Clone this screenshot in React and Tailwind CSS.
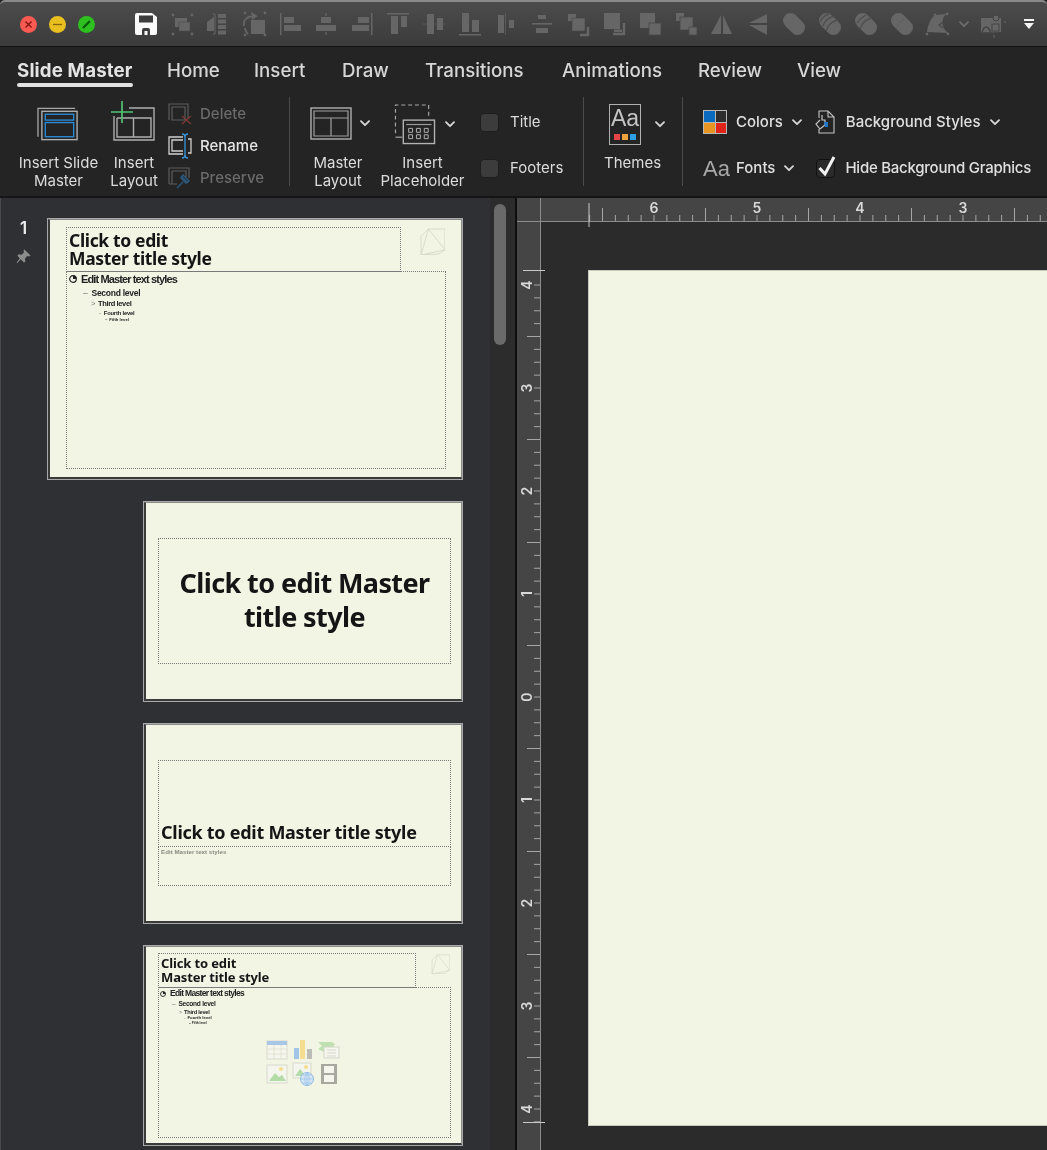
import React from 'react'

const G = '#666666'

// toolbar drawings, 28x28 box
const Handles = ({ p }) => p.map(([x, y], i) => <circle key={i} cx={x} cy={y} r="1.4" fill={G} />)
const Blob = ({ children }) => (
    <>
        <line x1="10.5" y1="10.5" x2="17.5" y2="17.5" stroke={G} strokeWidth="15" strokeLinecap="round" />
        {children}
    </>
)

const toolbarIcons = [
    <><rect x="7" y="8" width="12" height="9" fill={G} /><rect x="11" y="12" width="11" height="9" fill={G} stroke="#4a4a4a" strokeWidth=".6" /><Handles p={[[5, 5], [24, 5], [5, 24], [24, 24]]} /></>,
    <><path d="M3 12 L10 7 V21 H3 Z" fill={G} /><path d="M9 4H11V24H9" fill="none" stroke={G} strokeWidth="1" /><rect x="14" y="4" width="8" height="4" fill={G} /><rect x="14" y="9.5" width="8" height="4" fill={G} /><rect x="14" y="15" width="8" height="4" fill={G} /><rect x="14" y="20.5" width="8" height="4" fill={G} /></>,
    <><rect x="11" y="10" width="14" height="14" fill={G} /><path d="M4 16 C3 9 8 6 15 6 M11 3 L16 6 L12 9 M8 24 C6 22 5 20 5 18" fill="none" stroke={G} strokeWidth="1.8" /><Handles p={[[5, 3], [25, 3], [25, 25], [5, 25]]} /></>,
    <><rect x="4" y="3" width="1.5" height="22" fill={G} /><rect x="8" y="7" width="10" height="6" fill={G} /><rect x="8" y="15" width="17" height="6" fill={G} /></>,
    <><rect x="13.4" y="3" width="1.2" height="3" fill={G} /><rect x="9" y="7" width="10" height="6" fill={G} /><rect x="4" y="15" width="20" height="6" fill={G} /><rect x="13.4" y="22" width="1.2" height="3" fill={G} /></>,
    <><rect x="23" y="3" width="1.5" height="22" fill={G} /><rect x="10" y="7" width="11" height="6" fill={G} /><rect x="4" y="15" width="17" height="6" fill={G} /></>,
    <><rect x="3" y="3" width="22" height="1.5" fill={G} /><rect x="7" y="6" width="7" height="18" fill={G} /><rect x="17" y="6" width="6" height="11" fill={G} /></>,
    <><rect x="2" y="13.5" width="24" height="1" fill={G} opacity=".5" /><rect x="7" y="4" width="7" height="20" fill={G} /><rect x="17" y="8" width="6" height="12" fill={G} /></>,
    <><rect x="3" y="24" width="22" height="1.5" fill={G} /><rect x="6" y="3" width="7" height="19" fill={G} /><rect x="16" y="10" width="7" height="12" fill={G} /></>,
    <><rect x="6" y="5" width="6" height="18" fill={G} /><rect x="13" y="3" width="1" height="22" fill={G} opacity=".6" /><rect x="17" y="10" width="5" height="8" fill={G} /></>,
    <><rect x="10" y="5" width="8" height="4" fill={G} /><rect x="4" y="13" width="20" height="1.6" fill={G} /><rect x="8" y="18" width="12" height="5" fill={G} /></>,
    <><rect x="4" y="4" width="8" height="7" fill={G} /><rect x="8" y="8" width="13" height="13" fill={G} stroke="#484848" strokeWidth=".6" /><path d="M24 17V25H16" fill="none" stroke={G} strokeWidth="2.4" /></>,
    <><rect x="4" y="3" width="16" height="16" fill={G} /><path d="M24 13V24H13" fill="none" stroke={G} strokeWidth="2.4" /><rect x="14" y="19.5" width="8" height="2.5" fill={G} /></>,
    <><rect x="4" y="3" width="15" height="15" fill={G} /><rect x="13" y="13" width="12" height="12" fill={G} stroke="#484848" strokeWidth=".8" /></>,
    <><rect x="4" y="3" width="8" height="8" fill={G} /><rect x="8" y="7" width="13" height="13" fill={G} stroke="#484848" strokeWidth=".8" /><rect x="17" y="17" width="8" height="8" fill={G} stroke="#484848" strokeWidth=".8" /></>,
    <><path d="M13 5 V24 H3 Z" fill={G} /><path d="M15 5 L24 24 H15 Z" fill={G} /></>,
    <><path d="M23 4 V13 H5 Z" fill={G} /><path d="M23 15 V25 L5 15 Z" fill={G} /></>,
    <Blob />,
    <Blob><path d="M7 16 C9 10 13 7 19 6 M10 21 C12 15 16 11 22 10 M4 12 C6 8 9 5 13 4" fill="none" stroke="#4f4f4f" strokeWidth="1.3" /></Blob>,
    <Blob><path d="M8 19 C10 13 14 9 20 8 M5 13 C7 10 10 7 14 5" fill="none" stroke="#4f4f4f" strokeWidth="1.3" /></Blob>,
    <Blob><path d="M8 20 C10 14 13 10 19 8" fill="none" stroke="#565656" strokeWidth="1" strokeDasharray="2 2" /></Blob>,
    <><path d="M3 22 C4 13 8 7 11 5 L22 4 C17 9 17 17 24 23 Z" fill={G} /><path d="M19 12 L15 15 L19 18" fill="none" stroke="#4a4a4a" strokeWidth="1.2" /><Handles p={[[11, 5], [23, 4], [3, 24], [24, 24]]} /></>,
]

const Chevron = ({ className = 'w-[10px] h-[7px]', stroke = '#d8d8d8' }) => (
    <svg viewBox="0 0 10 7" className={className} fill="none" stroke={stroke} strokeWidth="1.8">
        <path d="M1 1.2 L5 5.2 L9 1.2" strokeLinecap="round" strokeLinejoin="round" />
    </svg>
)

const TitleBar = () => (
    <div className="h-[47px] flex items-center shrink-0 bg-gradient-to-b from-[#4c4c4c] to-[#3b3b3b] border-t-2 border-t-[#8a8a8a] border-b border-b-[#141414] rounded-t-[5px]">
        <div className="flex gap-[12px] ml-[20px] w-[108px]">
            <svg viewBox="0 0 17 17" className="w-[17px] h-[17px]"><circle cx="8.5" cy="8.5" r="8.5" fill="#fb5a53" /><path d="M5.5 5.5 L11.5 11.5 M11.5 5.5 L5.5 11.5" stroke="#7c1410" strokeWidth="1.3" /></svg>
            <svg viewBox="0 0 17 17" className="w-[17px] h-[17px]"><circle cx="8.5" cy="8.5" r="8.5" fill="#e8bf1f" /><path d="M4 8.5 H13" stroke="#85660a" strokeWidth="1.3" /></svg>
            <svg viewBox="0 0 17 17" className="w-[17px] h-[17px]"><circle cx="8.5" cy="8.5" r="8.5" fill="#2dc01f" /><path d="M5 12 L12 5" stroke="#0a5e0a" strokeWidth="2.4" /></svg>
        </div>
        <div className="flex items-center">
            <div className="w-[36px] flex justify-center">
                <svg viewBox="0 0 22 22" className="w-[22px] h-[22px]">
                    <path d="M2 0 H17 L22 4 V20 Q22 22 20 22 H2 Q0 22 0 20 V2 Q0 0 2 0 Z" fill="#fafafa" />
                    <rect x="4" y="2.5" width="14" height="7" fill="#3d3d3d" />
                    <path d="M7 22 V17 Q7 15 9 15 H13 Q15 15 15 17 V22 H12.5 V18 H9.5 V22 Z" fill="#3d3d3d" />
                </svg>
            </div>
            {toolbarIcons.map((icon, i) => (
                <div key={i} className="w-[36px] flex justify-center">
                    <svg viewBox="0 0 28 28" className="w-[28px] h-[28px]">{icon}</svg>
                </div>
            ))}
            <Chevron className="w-[10px] h-[7px] ml-[3px]" stroke="#6c6c6c" />
            <div className="w-[37px] flex justify-end">
                <svg viewBox="0 0 28 28" className="w-[28px] h-[28px]">
                    <path d="M3 23 V8 H23 V22 Z" fill={G} />
                    <path d="M4 23 C6 15 10 15 13 23 Z" fill="none" stroke="#444" strokeWidth="1.3" />
                    <circle cx="18" cy="8" r="3" fill={G} stroke="#444" />
                    <rect x="14" y="14" width="7" height="7" fill={G} stroke="#444" />
                    <path d="M26 12 H28 M16 25 V28" stroke={G} />
                </svg>
            </div>
            <div className="ml-[18px] flex flex-col items-center gap-[2px]">
                <div className="w-[10px] h-[2px] bg-[#f4f4f4]" />
                <svg viewBox="0 0 10 6" className="w-[10px] h-[6px]"><path d="M0 0 H10 L5 6 Z" fill="#f4f4f4" /></svg>
            </div>
        </div>
    </div>
)

const tabs = [
    ['Slide Master', 'w-[150px]'],
    ['Home', 'w-[87px]'],
    ['Insert', 'w-[88px]'],
    ['Draw', 'w-[83px]'],
    ['Transitions', 'w-[137px]'],
    ['Animations', 'w-[136px]'],
    ['Review', 'w-[99px]'],
    ['View', 'w-[80px]'],
]

const Tabs = () => (
    <div className="h-[43px] flex pl-[17px] text-[18.7px] leading-[47px] font-medium text-[#d6d6d6] shrink-0">
        {tabs.map(([name, w], i) => (
            <div key={name} className={w}>
                <span className={i === 0 ? 'relative inline-block font-bold text-[#e4e4e4] tracking-[0.15px]' : 'inline-block'}>
                    {name}
                    {i === 0 && <span className="absolute left-0 right-0 top-[36px] h-[3.5px] rounded-full bg-[#e2e2e2]" />}
                </span>
            </div>
        ))}
    </div>
)

const Divider = ({ className }) => <div className={`w-px h-[89px] mt-[7px] bg-[#4b4b4b] ${className}`} />

const LargeButton = ({ className, icon, children }) => (
    <div className={`flex flex-col items-center shrink-0 ${className}`}>
        <div className="h-[64px] flex items-center">{icon}</div>
        <div className="text-center leading-[18px] text-[#dcdcdc] whitespace-nowrap">{children}</div>
    </div>
)

const SmallRow = ({ icon, label, dim }) => (
    <div className="h-[32px] flex items-center gap-[8px]">
        {icon}
        <span className={dim ? 'text-[#6a6a6a] font-medium' : 'text-[#e6e6e6] font-medium'}>{label}</span>
    </div>
)

const Check = ({ label }) => (
    <div className="h-[46px] flex items-center">
        <div className="w-[19px] h-[19px] rounded-[4px] bg-[#3c3c3c] border border-[#1e1e1e]" />
        <span className="ml-[11px] pt-[1px] text-[#dcdcdc]">{label}</span>
    </div>
)

const Ribbon = () => (
    <div className="h-[108px] flex text-[15px] shrink-0 border-b-2 border-b-[#141414]">
        <LargeButton className="w-[101px] ml-[8px]" icon={
            <svg viewBox="0 0 44 34" className="w-[43px] h-[34px] mt-[4px]" fill="none">
                <path d="M1 30 V1 H39" stroke="#a8a8a8" strokeWidth="1.3" />
                <rect x="5" y="4" width="36" height="29" stroke="#b0b0b0" strokeWidth="1.4" />
                <rect x="8.5" y="7" width="29" height="6" stroke="#2b8ad4" strokeWidth="1.4" />
                <rect x="8.5" y="15.5" width="29" height="14.5" stroke="#2b8ad4" strokeWidth="1.4" />
            </svg>
        }>Insert Slide<br />Master</LargeButton>
        <LargeButton className="w-[50px]" icon={
            <svg viewBox="0 0 46 42" className="w-[46px] h-[42px] mb-[2px]" fill="none">
                <path d="M18 8 H43 V40 H3 V16 M6 18 H40 V37 H6 V18 M22.5 18 V37" stroke="#aeaeae" strokeWidth="1.4" />
                <path d="M11 1 V23 M0 12 H22" stroke="#52c274" strokeWidth="1.7" />
            </svg>
        }>Insert<br />Layout</LargeButton>
        <div className="w-[110px] ml-[9px] pt-[8px] shrink-0">
            <SmallRow dim label="Delete" icon={
                <svg viewBox="0 0 24 22" className="w-[24px] h-[22px]" fill="none">
                    <path d="M1 17 V1 H20 V16 M4 4 H17 V17 H4 Z" stroke="#5c5c5c" strokeWidth="1.2" />
                    <path d="M14 13 L23 21 M23 13 L14 21" stroke="#7c3a36" strokeWidth="1.3" />
                </svg>
            } />
            <SmallRow label="Rename" icon={
                <svg viewBox="0 0 24 26" className="w-[24px] h-[26px]" fill="none">
                    <path d="M15 4 H1 V21 H15 M15 7 H4 V18 H15 M20 6 H23 V20 H20" stroke="#d0d0d0" strokeWidth="1.3" />
                    <path d="M14 1 Q17 1 17 4 V22 Q17 25 14 25 M20 1 Q17 1 17 4 M20 25 Q17 25 17 22" stroke="#3a96dc" strokeWidth="1.3" />
                </svg>
            } />
            <SmallRow dim label="Preserve" icon={
                <svg viewBox="0 0 24 22" className="w-[24px] h-[22px]" fill="none">
                    <path d="M1 17 V1 H21 V11 M4 4 H18 V10 M4 4 V17 H9 M1 17 H7" stroke="#5c5c5c" strokeWidth="1.2" />
                    <path d="M9 21 L15 15 M13 9 L20 16 M15 8 L21 14 L18 16 L13 11 Z" stroke="#2d5a7e" strokeWidth="1.4" />
                </svg>
            } />
        </div>
        <Divider className="ml-[11px] mr-[13px]" />
        <LargeButton className="w-[70px]" icon={
            <div className="flex items-center gap-[8px] mt-[3px] relative left-[2px]">
                <svg viewBox="0 0 42 33" className="w-[42px] h-[33px]" fill="none">
                    <rect x="1" y="1" width="40" height="31" stroke="#b0b0b0" strokeWidth="1.4" />
                    <path d="M4 4 H38 V29 H4 Z M4 11 H38 M21 11 V29" stroke="#a0a0a0" strokeWidth="1.2" />
                </svg>
                <Chevron />
            </div>
        }>Master<br />Layout</LargeButton>
        <LargeButton className="w-[85px] ml-[7px]" icon={
            <div className="flex items-center gap-[9px] mt-[5px] relative left-[2px]">
                <svg viewBox="0 0 42 42" className="w-[42px] h-[41px]" fill="none">
                    <path d="M1 30 V1 H35 V14" stroke="#a8a8a8" strokeWidth="1.2" strokeDasharray="4 3" />
                    <path d="M1 34 H8" stroke="#a8a8a8" strokeWidth="1.2" />
                    <rect x="9" y="16.5" width="32" height="24" stroke="#b4b4b4" strokeWidth="1.4" />
                    <path d="M12 21 H38" stroke="#9a9a9a" strokeWidth="1.2" />
                    <path d="M14.5 25 h4 v4 h-4 Z M22.5 25 h4 v4 h-4 Z M30.5 25 h4 v4 h-4 Z M14.5 31.5 h4 v4 h-4 Z M22.5 31.5 h4 v4 h-4 Z M30.5 31.5 h4 v4 h-4 Z" stroke="#b0b0b0" strokeWidth="1" />
                </svg>
                <Chevron />
            </div>
        }>Insert<br />Placeholder</LargeButton>
        <div className="w-[103px] ml-[15px] pt-[9px] shrink-0">
            <Check label="Title" />
            <Check label="Footers" />
        </div>
        <Divider className="mr-[25px]" />
        <LargeButton className="w-[48px] mr-[25px] items-start" icon={
            <div className="flex items-center gap-[14px] mt-[5px]">
                <div className="w-[32px] h-[41px] border-[1.5px] border-[#b0b0b0] flex flex-col items-center">
                    <span className="text-[23px] leading-[24px] mt-[1px] font-light text-[#c4c4c4] font-['Liberation_Sans',sans-serif]">Aa</span>
                    <div className="flex gap-[2px] mt-[4px]">
                        <div className="w-[6px] h-[6px] bg-[#e2454a]" />
                        <div className="w-[6px] h-[6px] bg-[#efa23e]" />
                        <div className="w-[6px] h-[6px] bg-[#2f9fe4]" />
                    </div>
                </div>
                <Chevron />
            </div>
        }><span className="block ml-[-5px]">Themes</span></LargeButton>
        <Divider className="mr-[20px]" />
        <div className="pt-[9px]">
            <div className="h-[46px] flex items-center">
                <div className="w-[24px] h-[24px] grid grid-cols-2 border border-[#b8b8b8] bg-[#b8b8b8] gap-px">
                    <div className="bg-[#0a6ac0]" />
                    <div className="bg-[#2e2e2e]" />
                    <div className="bg-[#e89420]" />
                    <div className="bg-[#e0241a]" />
                </div>
                <span className="ml-[9px] pt-[1px] text-[#e0e0e0] font-medium">Colors</span>
                <Chevron className="w-[10px] h-[7px] ml-[9px]" />
                <svg viewBox="0 0 20 24" className="w-[20px] h-[24px] ml-[13px]" fill="none">
                    <path d="M4 8 V1 H13 L19 7 V23 H4 V19 M13 1 V7 H19" stroke="#c4c4c4" strokeWidth="1.1" />
                    <path d="M7 5 V10 H10 V15 L5 19 L1 14 L5 10" stroke="#c4c4c4" strokeWidth="1.2" />
                    <path d="M9 12 H13 V17 H10 Z" fill="#1f76c4" />
                </svg>
                <span className="ml-[11px] pt-[1px] text-[#e0e0e0] font-medium">Background Styles</span>
                <Chevron className="w-[10px] h-[7px] ml-[9px]" />
            </div>
            <div className="h-[46px] flex items-center">
                <span className="w-[24px] text-[22px] font-light text-[#a8a8a8] font-['Liberation_Sans',sans-serif] whitespace-nowrap">Aa</span>
                <span className="ml-[9px] pt-[1px] text-[#e0e0e0] font-medium">Fonts</span>
                <Chevron className="w-[10px] h-[7px] ml-[9px]" />
                <div className="relative w-[19px] h-[19px] ml-[22px] rounded-[4px] bg-[#2a2a2a] border border-[#121212]">
                    <svg viewBox="0 0 20 22" className="absolute left-0 top-[-5px] w-[20px] h-[22px]" fill="none">
                        <path d="M2.5 13 L8 19 L17 2" stroke="#f2f2f2" strokeWidth="3" />
                    </svg>
                </div>
                <span className="ml-[10px] pt-[1px] text-[#e0e0e0] font-medium tracking-[-0.25px]">Hide Background Graphics</span>
            </div>
        </div>
    </div>
)

const Logo = ({ className }) => (
    <svg viewBox="0 0 24 26" className={className} fill="none" stroke="#d3d6c4" strokeWidth=".8">
        <path d="M1 8 L8 1 H24 V21 L18 25 L1 26 Z M8 1 L24 21 M1 26 L24 21 M8 1 L1 26" />
    </svg>
)

const Thumb = ({ className, children }) => (
    <div className={`shrink-0 border border-[#a8a8a8] ${className}`}>
        <div className="relative w-full h-full bg-[#f2f5e4] border-[1px] border-l-[2px] border-b-[2px] border-[#3a3a3a] border-t-[#8a8a8a] border-r-[#8a8a8a] overflow-hidden font-['Noto_Sans',sans-serif] font-bold text-[#151515]">
            {children}
        </div>
    </div>
)

const Box = ({ className, children }) => <div className={`absolute border border-dotted border-[#7a7a7a] ${className}`}>{children}</div>

const Level = ({ mark, children, className }) => (
    <div className={`absolute whitespace-nowrap font-['Liberation_Sans',sans-serif] font-bold text-[#222] ${className}`}>
        {mark}{children}
    </div>
)

const PlaceholderIcons = () => (
    <svg viewBox="0 0 76 48" className="absolute left-[120px] top-[91px] w-[76px] h-[48px]" fill="none">
        <rect x="1" y="3" width="20" height="18" fill="#f4f5ec" stroke="#d8dacc" />
        <rect x="1" y="3" width="20" height="4" fill="#a8c6e6" />
        <path d="M1 11H21M1 16H21M8 7V21M15 7V21" stroke="#dcdccc" strokeWidth=".7" />
        <rect x="28" y="10" width="5" height="11" fill="#a2c4e6" />
        <rect x="34" y="2" width="5" height="19" fill="#f5dd90" />
        <rect x="41" y="11" width="5" height="10" fill="#bcbcb4" />
        <path d="M52 4 H66 L69 6 L66 10 H58 V15 H60 L52 11 L56 8 Z" fill="#bfe0b0" />
        <rect x="58" y="9" width="15" height="11" fill="#f6f6ee" stroke="#d4d6c8" />
        <path d="M61 12H70M61 15H70M61 18H70" stroke="#c8cabc" strokeWidth=".7" />
        <rect x="1" y="27" width="20" height="18" fill="#f4f5ec" stroke="#d8dacc" />
        <path d="M3 43 L9 35 L13 39 L16 37 L20 43 Z" fill="#b4dca8" />
        <circle cx="15" cy="31" r="2" fill="#f5dd90" />
        <rect x="27" y="25" width="18" height="15" fill="#f4f5ec" stroke="#d8dacc" />
        <path d="M29 38 L34 31 L40 38 Z" fill="#b4dca8" />
        <circle cx="40" cy="29" r="2" fill="#f5dd90" />
        <circle cx="41" cy="41" r="6.5" fill="#d6e6f4" stroke="#90bce4" />
        <path d="M34.5 41H47.5M41 34.5V47.5M36 37H46M36 45H46M41 34.5C38 38 38 44 41 47.5M41 34.5C44 38 44 44 41 47.5" stroke="#90bce4" strokeWidth=".6" />
        <rect x="55" y="26" width="16" height="20" fill="#a8a89e" />
        <rect x="58" y="28" width="10" height="7" fill="#f4f5ec" />
        <rect x="58" y="37" width="10" height="7" fill="#f4f5ec" />
    </svg>
)

const Thumbnails = () => (
    <div className="w-[490px] h-full overflow-hidden shrink-0 bg-[#2f3033] border-l border-l-[#4a4a4a] relative">
        <div className="pt-[20px]">
            <div className="flex">
                <div className="w-[46px] flex flex-col items-center text-[#ededed] font-semibold text-[17px] pr-[1px]">
                    <span className="leading-[20px]">1</span>
                    <svg viewBox="0 0 16 16" className="w-[15px] h-[15px] mt-[11px]" fill="#8c8c8c">
                        <path d="M9 0.5 L15.5 7 L14 8 L12 7.5 L9.5 10.5 L10 13.5 L8.5 14.5 L5 11 L1.5 15 L0.5 14.5 L4 10 L1.5 7 L3 5.5 L6 6 L8.5 3.5 L8 1.5 Z" />
                    </svg>
                </div>
                <Thumb className="w-[416px] h-[262px]">
                    <Box className="left-[16px] top-[7px] w-[335px] h-[45px]" />
                    <div className="absolute left-[19px] top-[12px] text-[17.5px] leading-[17.5px] tracking-[-0.02em]">Click to edit<br />Master title style</div>
                    <Logo className="absolute left-[370px] top-[8px] w-[25px] h-[27px]" />
                    <Box className="left-[16px] top-[51px] w-[380px] h-[198px]" />
                    <svg viewBox="0 0 8 8" className="absolute left-[19px] top-[55px] w-[8px] h-[8px]"><circle cx="4" cy="4" r="3.3" fill="none" stroke="#222" strokeWidth="1.2" /><path d="M4 4 V.5 A3.5 3.5 0 0 1 7.5 4 Z" fill="#222" /></svg>
                    <Level className="left-[31px] top-[52px] text-[11px] leading-[14px] tracking-[-0.08em]">Edit Master text styles</Level>
                    <Level className="left-[33px] top-[67px] text-[8.5px] leading-[12px] tracking-[-0.03em]"><span className="font-normal mr-[4px] text-[#777]">–</span>Second level</Level>
                    <Level className="left-[41px] top-[79px] text-[7.5px] leading-[10px] tracking-[-0.05em]"><span className="font-normal mr-[3px] text-[#777]">&gt;</span>Third level</Level>
                    <Level className="left-[49px] top-[89px] text-[5.8px] leading-[8px] tracking-[-0.03em]"><span className="font-normal mr-[3px] text-[#777]">-</span>Fourth level</Level>
                    <Level className="left-[55px] top-[97px] text-[4.2px] leading-[6px]"><span className="mr-[2px]">–</span>Fifth level</Level>
                </Thumb>
            </div>
            <div className="flex flex-col items-end gap-[21px] mt-[21px] pr-[27px]">
                <Thumb className="w-[320px] h-[201px]">
                    <Box className="left-[12px] top-[35px] w-[293px] h-[126px]" />
                    <div className="absolute left-[12px] top-[63px] w-[293px] text-center text-[27px] leading-[34px] tracking-[-0.022em]">Click to edit Master<br />title style</div>
                </Thumb>
                <Thumb className="w-[320px] h-[201px]">
                    <Box className="left-[12px] top-[35px] w-[293px] h-[87px]" />
                    <Box className="left-[12px] top-[121px] w-[293px] h-[40px]" />
                    <div className="absolute left-[15px] top-[93px] whitespace-nowrap text-[18px] leading-[28px] tracking-[-0.015em]">Click to edit Master title style</div>
                    <div className="absolute left-[15px] top-[122px] whitespace-nowrap text-[6.2px] leading-[10px] font-['Liberation_Sans',sans-serif] text-[#8a8a80]">Edit Master text styles</div>
                </Thumb>
                <Thumb className="w-[320px] h-[201px]">
                    <Box className="left-[12px] top-[6px] w-[258px] h-[35px]" />
                    <div className="absolute left-[15px] top-[10px] text-[13px] leading-[13.5px] tracking-[-0.01em]">Click to edit<br />Master title style</div>
                    <Logo className="absolute left-[285px] top-[7px] w-[19px] h-[20px]" />
                    <Box className="left-[12px] top-[40px] w-[293px] h-[151px]" />
                    <svg viewBox="0 0 8 8" className="absolute left-[14px] top-[44px] w-[6px] h-[6px]"><circle cx="4" cy="4" r="3.3" fill="none" stroke="#222" strokeWidth="1.2" /><path d="M4 4 V.5 A3.5 3.5 0 0 1 7.5 4 Z" fill="#222" /></svg>
                    <Level className="left-[24px] top-[41px] text-[8.5px] leading-[11px] tracking-[-0.08em]">Edit Master text styles</Level>
                    <Level className="left-[26px] top-[52px] text-[6.6px] leading-[9px] tracking-[-0.04em]"><span className="font-normal mr-[3px] text-[#777]">–</span>Second level</Level>
                    <Level className="left-[33px] top-[61px] text-[5.6px] leading-[8px] tracking-[-0.04em]"><span className="font-normal mr-[2px] text-[#777]">&gt;</span>Third level</Level>
                    <Level className="left-[38px] top-[68px] text-[4.3px] leading-[6px]"><span className="font-normal mr-[2px] text-[#777]">-</span>Fourth level</Level>
                    <Level className="left-[43px] top-[74px] text-[3.2px] leading-[5px]"><span className="mr-[1px]">–</span>Fifth level</Level>
                    <PlaceholderIcons />
                </Thumb>
            </div>
        </div>
    </div>
)

// ruler ticks: 103px per inch, eight divisions
const topStart = 654 - 517
const topTicks = Array.from({ length: 48 }, (_, i) => i - 6).map((k) => ({ x: topStart + k * 12.875, k }))
const sideTicks = Array.from({ length: 66 }, (_, i) => i).map((k) => ({ y: 285 - 222 + k * 12.875, k }))
const sideLabels = [4, 3, 2, 1, 0, 1, 2, 3, 4]

const TopRuler = () => (
    <svg width="530" height="24" className="block overflow-visible shrink-0 relative z-10">
        <rect width="530" height="24" fill="#454545" />
        <rect y="23" width="530" height="1" fill="#8c8c8c" />
        <rect x="23" y="0" width="1" height="24" fill="#8c8c8c" />
        {topTicks.map(({ x, k }) => x > 72 && (
            <rect key={k} x={x - 0.5} y={k % 8 === 4 || k % 8 === -4 ? 10 : 17} width="1" height={k % 8 === 4 || k % 8 === -4 ? 13 : 6} fill="#a6a6a6" />
        ))}
        {[6, 5, 4, 3].map((n, i) => (
            <text key={n} x={topStart + i * 103} y="15" textAnchor="middle" fontSize="14" fontWeight="600" fill="#d8d8d8" fontFamily="Inter, sans-serif">{n}</text>
        ))}
        <rect x="71.5" y="5" width="1" height="24" fill="#c8c8c8" />
    </svg>
)

const SideRuler = () => (
    <svg width="24" height="928" className="block overflow-visible shrink-0 relative z-10">
        <rect width="24" height="928" fill="#454545" />
        <rect x="23" width="1" height="928" fill="#8c8c8c" />
        {sideTicks.map(({ y, k }) => (
            <rect key={k} x={k % 8 === 4 ? 10 : 17} y={y - 0.5} width={k % 8 === 4 ? 13 : 6} height="1" fill="#a6a6a6" />
        ))}
        {sideLabels.map((n, i) => {
            const y = 63 + i * 103
            return <text key={i} x="9" y={y} transform={`rotate(-90 9 ${y})`} textAnchor="middle" dominantBaseline="central" fontSize="14" fontWeight="600" fill="#d8d8d8" fontFamily="Inter, sans-serif">{n}</text>
        })}
        <rect x="6" y="48" width="22" height="1" fill="#c8c8c8" />
        <rect x="6" y="900" width="22" height="1" fill="#c8c8c8" />
    </svg>
)

const Canvas = () => (
    <div className="flex-1 min-w-0 flex flex-col bg-[#2b2b2b] overflow-hidden">
        <TopRuler />
        <div className="flex flex-1 min-h-0">
            <SideRuler />
            <div className="flex-1 pl-[47px] pt-[48px]">
                <div className="h-[856px] bg-[#f2f5e4] border-l border-t border-b border-[#c9c9c0]" />
            </div>
        </div>
    </div>
)

const App = () => {
    return (
        <div className="w-[1047px] h-[1150px] overflow-hidden flex flex-col bg-[#242424] font-['Inter',sans-serif] blur-[0.35px]">
            <TitleBar />
            <Tabs />
            <Ribbon />
            <div className="flex flex-1 min-h-0">
                <Thumbnails />
                <div className="w-[25px] shrink-0 bg-[#2c2c2c] pt-[6px] pl-[4px]">
                    <div className="w-[12px] h-[141px] rounded-full bg-[#6a6a6a]" />
                </div>
                <div className="w-[2px] shrink-0 bg-[#0e0e0e]" />
                <Canvas />
            </div>
        </div>
    )
}

export default App
